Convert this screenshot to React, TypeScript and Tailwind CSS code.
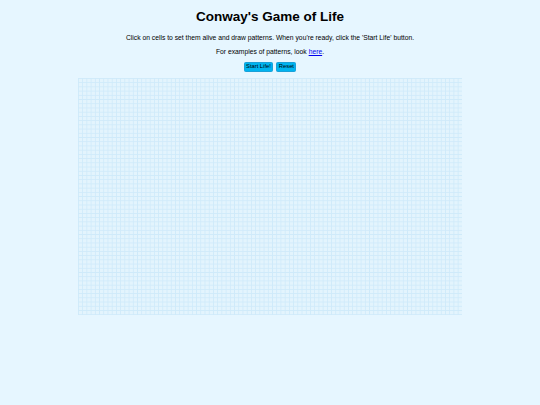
import React from "react";

export default function App() {
  return (
    <div className="min-h-[405px] w-full bg-[#e6f6ff] font-['Liberation_Sans',Arial,sans-serif] text-black flex flex-col items-center">
      <h1 className="mt-[9px] text-[13.5px] leading-[15.6px] font-bold">Conway's Game of Life</h1>
      <p className="mt-[9px] text-[6.75px] leading-[7.8px]">
        Click on cells to set them alive and draw patterns. When you're ready, click the 'Start Life' button.
      </p>
      <p className="mt-[6.75px] text-[6.75px] leading-[7.8px]">
        For examples of patterns, look <a href="#" className="text-[#0000ee] underline">here</a>.
      </p>
      <div className="mt-[6px] flex gap-[3px]">
        <button className="bg-[#00b4f0] border-[0.5px] border-[#1aa0d8] rounded-[1.5px] px-[1.5px] text-[5.8px] leading-[6.6px] py-[0.5px]">Start Life!</button>
        <button className="bg-[#00b4f0] border-[0.5px] border-[#1aa0d8] rounded-[1.5px] px-[1.5px] text-[5.8px] leading-[6.6px] py-[0.5px]">Reset</button>
      </div>
      <div className="mt-[6px] w-[384px] h-[237px] bg-[#e3f4fd] bg-[linear-gradient(to_right,#cfeafa_1px,transparent_1px),linear-gradient(to_bottom,#cfeafa_1px,transparent_1px)] bg-[size:4.22px_4.22px]" />
    </div>
  );
}
